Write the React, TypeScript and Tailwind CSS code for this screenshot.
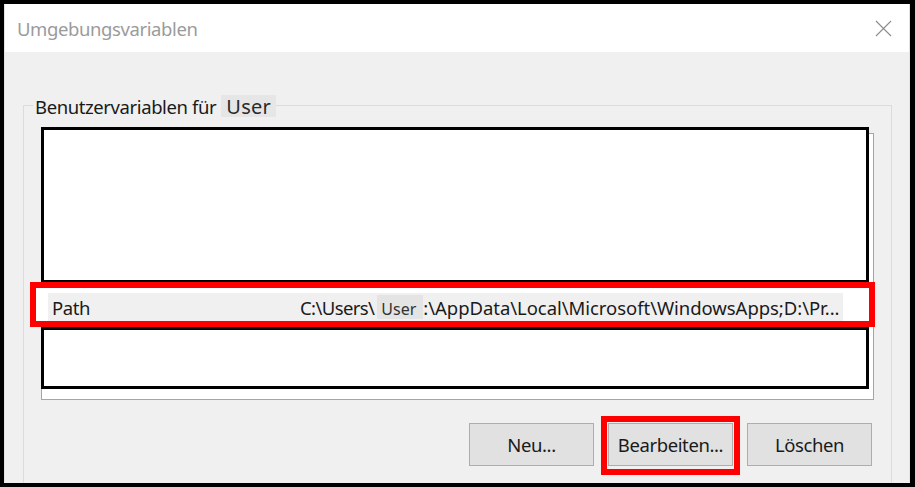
export default function App() {
  return (
    <div className="w-[915px] h-[487px] overflow-hidden bg-black pt-[4px] pl-[4px] pr-[5px] pb-[4px] font-['Noto_Sans',sans-serif] text-[18.5px] leading-none tracking-[-0.4px] text-[#1a1a1a]">
      <div className="flex h-full flex-col border-x border-[#e3e3e3]">
        <div className="flex h-[48px] shrink-0 items-center justify-between bg-white pl-[12px] pr-[17px]">
          <span className="pt-[3px] text-[#9b9b9b]">Umgebungsvariablen</span>
          <svg width="17" height="17" viewBox="0 0 17 17" fill="none">
            <path d="M1 1L16 16M16 1L1 16" stroke="#8c8c8c" strokeWidth="1.1" />
          </svg>
        </div>
        <div className="flex-1 overflow-hidden bg-[#f0f0f0] pl-[18px] pr-[17px] pt-[53px]">
          <div className="relative h-[450px] border border-b-0 border-[#dcdcdc] px-[17px] pt-[27px]">
            <div className="absolute left-[9px] top-[-11px] flex h-[22px] items-center bg-[#f0f0f0] pl-[2px]">
              <span className="pt-[2px]">Benutzervariablen für</span>
              <span className="ml-[5px] flex h-[22px] items-center bg-[#e6e6e6] px-[5px] pt-[2px] text-[20px] tracking-[0.3px] text-[#2a2a2a]">
                User
              </span>
            </div>

            <div className="relative h-[267px] border border-[#a5a5a5] bg-white">
              <div className="-ml-px -mt-[7px] h-[156px] w-[828px] border-[3px] border-black bg-white" />
              <div className="-ml-[12px] -mt-px flex h-[45px] w-[845px] items-start border-[6px] border-[#ff0000] bg-white">
                <div className="ml-[12px] mt-[5px] flex h-[28px] w-[795px] items-center bg-[#f0f0f0] pt-[3px]">
                  <span className="w-[252px] shrink-0 pl-[4px]">Path</span>
                  <span className="whitespace-nowrap tracking-[-0.6px]">C:\Users\</span>
                  <span className="-mt-[3px] ml-[3px] flex h-[24px] items-center bg-[#e4e4e4] pl-[4px] pr-[7px] pt-[3px] text-[16px] tracking-[0px] text-[#333]">
                    User
                  </span>
                  <span className="whitespace-nowrap tracking-[-0.05px]">:\AppData\Local\Microsoft\WindowsApps;D:\Pr...</span>
                </div>
              </div>
              <div className="-ml-px h-[62px] w-[828px] border-[3px] border-black bg-white" />
            </div>

            <div className="mt-[23px] flex items-start justify-end gap-[14px] pr-[2px]">
              <button className="flex h-[43px] w-[125px] items-center justify-center border border-[#adadad] bg-[#e1e1e1] pt-[1px]">
                Neu...
              </button>
              <div className="-mx-[7px] -mt-[7px] -mb-[9px] border-[6px] border-[#ff0000] p-[1px] pb-[3px]">
                <button className="flex h-[43px] w-[125px] items-center justify-center border border-[#adadad] bg-[#e1e1e1] pt-[1px]">
                  Bearbeiten...
                </button>
              </div>
              <button className="flex h-[43px] w-[125px] items-center justify-center border border-[#adadad] bg-[#e1e1e1] pt-[1px]">
                Löschen
              </button>
            </div>
          </div>
        </div>
      </div>
    </div>
  );
}
